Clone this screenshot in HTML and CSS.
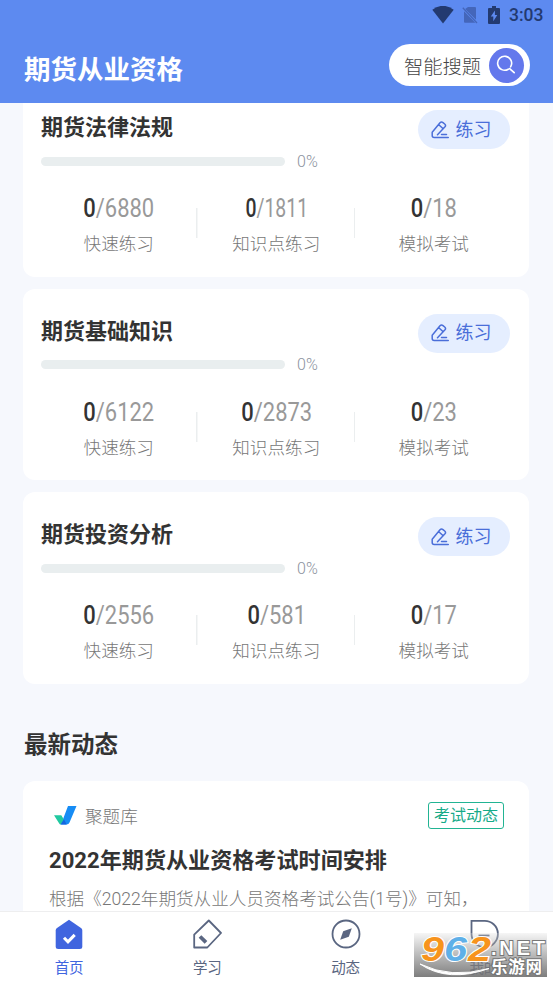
FILE: index.html
```html
<!DOCTYPE html>
<html lang="zh-CN">
<head>
    <meta charset="UTF-8">
    <meta name="viewport" content="width=device-width, initial-scale=1.0">
    <title>期货从业资格</title>
    <link rel="stylesheet" href="styles.css">
</head>
<body>
    <svg class="defs" width="0" height="0">
        <symbol id="icon-edit" viewBox="0 0 18 18">
            <path d="M7 16.500H3.200q-2 0-2-2v-3.300L9 1.800q1.400-1.500 3-.2l1.700 1.400q1.500 1.300.3 2.800L6.500 13.700M7.800 3.700l4.400 4.100M7 16.500h10.300M10.500 13.500h5" fill="none" stroke="currentColor" stroke-width="1.500" stroke-linecap="round" stroke-linejoin="round"/>
        </symbol>
    </svg>

    <!-- 顶部 -->
    <header class="header">
        <div class="status">
            <svg class="wifi" width="22" height="18" viewBox="0 0 22 18"><path d="M.3 3.8Q11-4.2 21.7 3.8L11 17.5z" fill="#233a70"/></svg>
            <svg class="sim" width="16" height="18" viewBox="0 0 16 18"><path d="M6 1h7q1 0 1 1v11.7L3.2 2.9zM2 5.2 13.3 16.7H3q-1 0-1-1z" fill="#4466ba"/><path d="M.8 1.8 15 17" stroke="#4466ba" stroke-width="1.3"/></svg>
            <svg class="battery" width="12" height="18" viewBox="0 0 12 18"><path d="M4 0h4v2h3q1 0 1 1v14q0 1-1 1H1q-1 0-1-1V3q0-1 1-1h3z" fill="#233a70"/><path d="M6.9 4.5 2.8 10.4h2.5v4.9l4-6.2H6.9z" fill="#5d8af0"/></svg>
            <span class="time">3:03</span>
        </div>
        <div class="title-bar">
            <h1>期货从业资格</h1>
            <div class="search">
                <span>智能搜题</span>
                <div class="search-icon">
                    <svg width="20" height="20" viewBox="0 0 20 20"><path d="M12.300 14.200A7 7 0 1 1 14.600 11.900" fill="none" stroke="#fff" stroke-width="1.600" stroke-linecap="round"/><path d="m13.600 13.600 4.600 4.100" stroke="#fff" stroke-width="1.700" stroke-linecap="round"/></svg>
                </div>
            </div>
        </div>
    </header>

    <main class="content">
        <!-- 科目列表 -->
        <section class="card">
            <div class="card-head">
                <h2>期货法律法规</h2>
                <button class="practice"><svg width="18" height="18"><use href="#icon-edit"/></svg>练习</button>
            </div>
            <div class="progress"><div class="bar"></div><span>0%</span></div>
            <div class="stats">
                <div class="stat"><p class="num"><b>0</b>/6880</p><p class="label">快速练习</p></div>
                <div class="stat"><p class="num narrow"><b>0</b>/1811</p><p class="label">知识点练习</p></div>
                <div class="stat"><p class="num"><b>0</b>/18</p><p class="label">模拟考试</p></div>
            </div>
        </section>

        <section class="card">
            <div class="card-head">
                <h2>期货基础知识</h2>
                <button class="practice"><svg width="18" height="18"><use href="#icon-edit"/></svg>练习</button>
            </div>
            <div class="progress"><div class="bar"></div><span>0%</span></div>
            <div class="stats">
                <div class="stat"><p class="num"><b>0</b>/6122</p><p class="label">快速练习</p></div>
                <div class="stat"><p class="num"><b>0</b>/2873</p><p class="label">知识点练习</p></div>
                <div class="stat"><p class="num"><b>0</b>/23</p><p class="label">模拟考试</p></div>
            </div>
        </section>

        <section class="card">
            <div class="card-head">
                <h2>期货投资分析</h2>
                <button class="practice"><svg width="18" height="18"><use href="#icon-edit"/></svg>练习</button>
            </div>
            <div class="progress"><div class="bar"></div><span>0%</span></div>
            <div class="stats">
                <div class="stat"><p class="num"><b>0</b>/2556</p><p class="label">快速练习</p></div>
                <div class="stat"><p class="num"><b>0</b>/581</p><p class="label">知识点练习</p></div>
                <div class="stat"><p class="num"><b>0</b>/17</p><p class="label">模拟考试</p></div>
            </div>
        </section>

        <!-- 最新动态 -->
        <h2 class="section-title">最新动态</h2>
        <article class="news">
            <div class="news-head">
                <svg width="23" height="19" viewBox="0 0 23 19">
                    <path d="M14 0h8.500l-7 16.500Q14.700 18.500 12.500 18.500H7z" fill="#168cf5"/>
                    <path d="M0 9.200h7.300l2.600 4.300-3 5q-1.200 0-2-1.500z" fill="#20c9a0"/>
                    <path d="M9.900 13.300 12.700 18.500H6.500z" fill="#1565df"/>
                </svg>
                <span class="source">聚题库</span>
                <span class="tag">考试动态</span>
            </div>
            <h3>2022年期货从业资格考试时间安排</h3>
            <p class="desc">根据《2022年期货从业人员资格考试公告(1号)》可知，</p>
        </article>
    </main>

    <!-- 底部导航 -->
    <nav class="tabs">
        <div class="tab active">
            <svg width="30" height="30" viewBox="0 0 30 30"><path d="M15 .8 27 9q1.300.9 1.300 2.500v16q0 2.500-2.500 2.500H4.200q-2.500 0-2.500-2.500v-16Q1.700 9.900 3 9z" fill="#4065df"/><path d="m10 18.700 4 4.200 6.700-7" fill="none" stroke="#fff" stroke-width="3"/></svg>
            <span>首页</span>
        </div>
        <div class="tab">
            <svg width="30" height="30" viewBox="0 0 30 30"><path d="M16.800 1.500 29 14 15.300 28.500H2.200V15.600z" fill="none" stroke="#5a6681" stroke-width="1.800" stroke-linejoin="round"/><path d="m8 17.500 6 5.800" stroke="#5a6681" stroke-width="3.800"/></svg>
            <span>学习</span>
        </div>
        <div class="tab">
            <svg width="30" height="30" viewBox="0 0 30 30"><circle cx="15" cy="15" r="13.500" fill="none" stroke="#5a6681" stroke-width="1.800"/><path d="M20.800 9.200 17.800 17.800 9.200 20.800 12.200 12.200z" fill="#5a6681"/></svg>
            <span>动态</span>
        </div>
        <div class="tab">
            <svg width="30" height="30" viewBox="0 0 30 30"><path d="M2.500 1.800H15a13.200 13.200 0 1 1-12.500 13.200z" fill="none" stroke="#5a6681" stroke-width="1.800"/><path d="M9.500 16.500h11" stroke="#5a6681" stroke-width="1.800"/></svg>
            <span>我的</span>
        </div>
    </nav>

    <!-- 水印 -->
    <div class="watermark">
        <svg width="133" height="44" viewBox="0 0 133 44">
            <path d="M6 31Q34 50 75 35.500 37 46 6 31z" fill="#fff" stroke="#fff"/>
            <g class="wm-big">
                <text x="7" y="28" textLength="23" lengthAdjust="spacingAndGlyphs" fill="#f7941d">9</text>
                <text x="30" y="28" textLength="23" lengthAdjust="spacingAndGlyphs" fill="#5fb0e8">6</text>
                <text x="54" y="28" textLength="23" lengthAdjust="spacingAndGlyphs" fill="#f7941d">2</text>
            </g>
            <text class="wm-net" x="77" y="22" textLength="54">.NET</text>
            <text class="wm-cn" x="77" y="40" textLength="51">乐游网</text>
        </svg>
    </div>
</body>
</html>
```
FILE: styles.css
```css
* {
    box-sizing: border-box;
}
body {
    margin: 0;
    height: 983px;
    display: flex;
    flex-direction: column;
    overflow: hidden;
    background: #f6f8fd;
    color: #333;
    font-family: Roboto, "Noto Sans CJK SC", sans-serif;
}
h1, h2, h3, p {
    margin: 0;
}
svg {
    flex-shrink: 0;
}
.defs {
    position: absolute;
}

/* 顶部 */
.header {
    height: 103px;
    flex-shrink: 0;
    background: #5d8af0;
}
.status {
    height: 30px;
    padding-right: 10px;
    display: flex;
    align-items: center;
    justify-content: flex-end;
}
.sim {
    margin-left: 8px;
}
.battery {
    margin-left: 10px;
}
.time {
    margin-left: 9px;
    width: 34px;
    color: #233a70;
    font-size: 17.5px;
    font-weight: 500;
    white-space: nowrap;
}
.title-bar {
    height: 70px;
    padding: 0 23.5px 0 24px;
    display: flex;
    align-items: center;
    justify-content: space-between;
}
h1 {
    color: #fff;
    font-size: 26.5px;
    font-weight: 700;
    line-height: 40px;
    padding-top: 9px;
}
.search {
    width: 140.5px;
    height: 42px;
    padding: 0 6px 0 15px;
    display: flex;
    align-items: center;
    justify-content: space-between;
    border-radius: 21px;
    background: #fff;
    color: #444;
    font-size: 19.3px;
    font-weight: 300;
    white-space: nowrap;
}
.search span {
    padding-top: 2px;
}
.search-icon {
    width: 35px;
    height: 35px;
    display: flex;
    align-items: center;
    justify-content: center;
    border-radius: 50%;
    background: #6478ec;
}

/* 科目卡片 */
.content {
    flex: 1;
    min-height: 0;
    overflow: hidden;
    padding: 0 24px 0 23px;
}
.card {
    height: 191.5px;
    margin-bottom: 12px;
    padding: 25px 16.5px 0 18px;
    border-radius: 12px;
    background: #fff;
}
.card:first-child {
    margin-top: -18px;
}
.card-head {
    height: 38px;
    display: flex;
    justify-content: space-between;
    padding-right: 3px;
}
.card-head h2 {
    padding-top: 2px;
    font-size: 22px;
    font-weight: 700;
    line-height: 32px;
}
.practice {
    width: 92px;
    height: 39px;
    padding: 0 0 0 13px;
    display: flex;
    align-items: center;
    gap: 7px;
    border: none;
    border-radius: 20px;
    background: #e5eeff;
    color: #4a6ed9;
    font-family: inherit;
    font-size: 18px;
    line-height: 24px;
}
.progress {
    height: 26px;
    display: flex;
    align-items: center;
}
.bar {
    width: 244px;
    height: 9px;
    border-radius: 5px;
    background: #e9eeef;
}
.progress span {
    margin-left: 12px;
    color: #8c929e;
    font-size: 16px;
    font-weight: 300;
}
.stats {
    display: flex;
    padding-top: 18px;
    margin-left: -1px;
}
.stat {
    flex: 1;
    text-align: center;
    background: linear-gradient(#ebeeef, #ebeeef) right 16px / 1.5px 30px no-repeat;
}
.stat:last-child {
    background: none;
}
.num {
    height: 32px;
    line-height: 32px;
    font-size: 25.5px;
    color: #999;
    transform: scaleX(0.86);
}
.num b {
    color: #333;
    font-weight: 500;
}
.narrow {
    transform: scaleX(0.76);
}
.label {
    height: 24px;
    margin-top: 8px;
    line-height: 24px;
    font-size: 17.6px;
    font-weight: 300;
    color: #777;
}

/* 动态 */
.section-title {
    margin-top: 43px;
    padding-left: 1px;
    font-size: 23.5px;
    font-weight: 700;
    line-height: 36px;
}
.news {
    height: 200px;
    margin-top: 18px;
    padding: 20px 25px 0 26px;
    border-radius: 12px;
    background: #fff;
}
.news-head {
    height: 29px;
    display: flex;
    align-items: center;
    padding-left: 5px;
}
.source {
    margin-left: 8px;
    font-size: 17.6px;
    font-weight: 300;
    color: #777;
}
.tag {
    width: 76px;
    height: 27px;
    margin-left: auto;
    border: 1px solid #22b493;
    border-radius: 3px;
    color: #16aa89;
    font-size: 16px;
    line-height: 25px;
    text-align: center;
    white-space: nowrap;
}
.news h3 {
    margin-top: 14px;
    font-size: 22.1px;
    font-weight: 700;
    line-height: 32px;
    white-space: nowrap;
}
.desc {
    margin-top: 10px;
    font-size: 17.6px;
    font-weight: 300;
    line-height: 26px;
    color: #777;
    white-space: nowrap;
}

/* 底部导航 */
.tabs {
    height: 72px;
    flex-shrink: 0;
    display: flex;
    border-top: 1px solid #eeeeef;
    background: #fff;
}
.tab {
    flex: 1;
    display: flex;
    flex-direction: column;
    align-items: center;
    padding-top: 7px;
    color: #5a6681;
    font-size: 14.5px;
}
.tab span {
    margin-top: 9px;
    line-height: 22px;
}
.active {
    color: #4065df;
}

/* 水印 */
.watermark {
    position: absolute;
    left: 414px;
    top: 933px;
    width: 133px;
    height: 44px;
    background: linear-gradient(rgba(225, 225, 225, 0.3), rgba(112, 112, 112, 0.9));
}
.watermark svg {
    display: block;
    overflow: visible;
}
.watermark text {
    paint-order: stroke;
    font-weight: 700;
}
.wm-big {
    font-family: "Liberation Sans", sans-serif;
    font-size: 35px;
    font-style: italic;
    stroke: #fff;
    stroke-width: 2px;
}
.wm-net {
    font-family: "Liberation Sans", sans-serif;
    font-size: 20px;
    fill: #fff;
    stroke: #777;
    stroke-width: 2px;
}
.wm-cn {
    font-family: "Noto Sans CJK SC", sans-serif;
    font-size: 16.5px;
    fill: #fff;
    stroke: #777;
    stroke-width: 2px;
}
```
